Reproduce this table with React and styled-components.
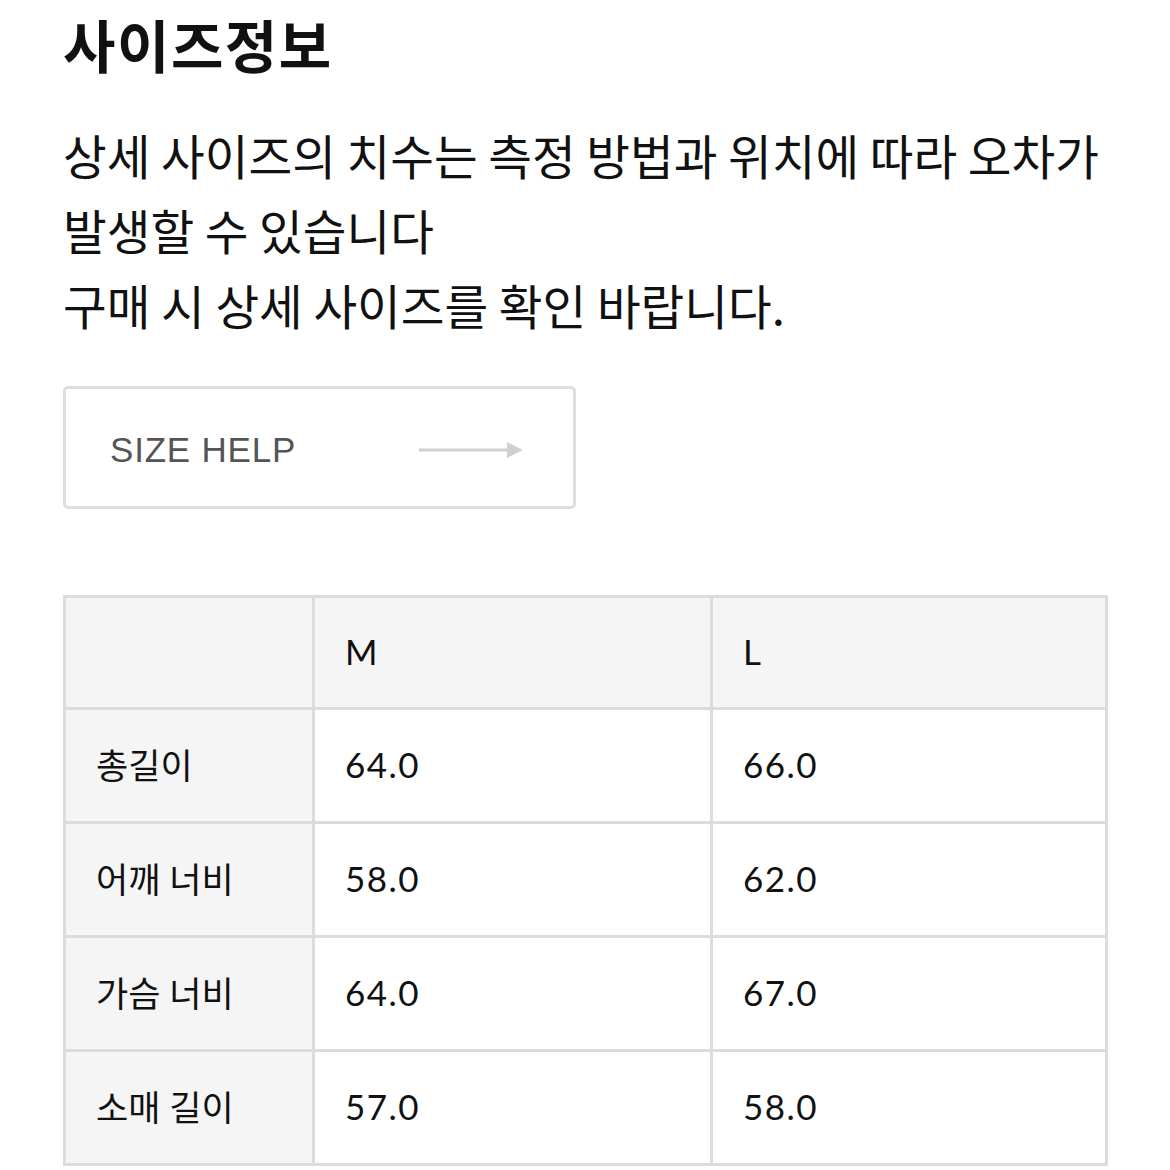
import React from 'react'
import styled, { createGlobalStyle } from 'styled-components'

const GlobalStyle = createGlobalStyle`
    body {
        margin: 0;
        background: #fff;
        font-family: "Noto Sans CJK KR", "Noto Sans", sans-serif;
        color: #111;
    }
`

const Page = styled.div`
    width: 1170px;
    height: 1170px;
    padding: 5px 63px 0;
    box-sizing: border-box;
    overflow: hidden;
`

const Title = styled.h1`
    margin: 0;
    font-size: 57px;
    line-height: 76px;
    font-weight: 700;
    letter-spacing: 1.5px;
    color: #111;
`

const Notice = styled.p`
    margin: 36px 0 0;
    font-size: 47.5px;
    line-height: 75px;
    font-weight: 400;
    color: #111;
    white-space: nowrap;
`

const HelpButton = styled.button`
    margin-top: 44px;
    width: 513px;
    height: 123px;
    display: flex;
    align-items: center;
    justify-content: space-between;
    padding: 4px 50px 0 44px;
    box-sizing: border-box;
    background: #fff;
    border: 3px solid #dedede;
    border-radius: 5px;
    font-family: "Liberation Sans", Arial, sans-serif;
    font-size: 35px;
    letter-spacing: 0.8px;
    color: #555;
    cursor: pointer;
`

const SizeTable = styled.table`
    margin-top: 86px;
    width: 1042px;
    border-collapse: collapse;
    table-layout: fixed;
    font-family: "Lato", "Noto Sans CJK KR", sans-serif;
    font-size: 35px;
    color: #111;
`

const Cell = styled.td`
    height: ${props => props.head ? '105px' : '107px'};
    padding: 0 0 4px 30px;
    border: 3px solid #dcdcdc;
    background: ${props => props.shaded ? '#f5f5f5' : '#fff'};
    text-align: left;
    vertical-align: middle;
    letter-spacing: ${props => props.num ? '1.5px' : '0'};
`

const Arrow = () => (
    <svg width="104" height="24" viewBox="0 0 104 24">
        <line x1="0" y1="12" x2="90" y2="12" stroke="#d0d0d0" strokeWidth="3" />
        <polygon points="88,4 104,12 88,20" fill="#d0d0d0" />
    </svg>
)

const rows = [
    ['총길이', '64.0', '66.0'],
    ['어깨 너비', '58.0', '62.0'],
    ['가슴 너비', '64.0', '67.0'],
    ['소매 길이', '57.0', '58.0'],
]

const App = () => (
    <Page>
        <GlobalStyle />
        <Title>사이즈정보</Title>
        <Notice>
            상세 사이즈의 치수는 측정 방법과 위치에 따라 오차가<br />
            발생할 수 있습니다<br />
            구매 시 상세 사이즈를 확인 바랍니다.
        </Notice>
        <HelpButton>
            <span>SIZE HELP</span>
            <Arrow />
        </HelpButton>
        <SizeTable>
            <colgroup>
                <col style={{ width: '249px' }} />
                <col style={{ width: '398px' }} />
                <col style={{ width: '395px' }} />
            </colgroup>
            <tbody>
                <tr>
                    <Cell head shaded></Cell>
                    <Cell head shaded>M</Cell>
                    <Cell head shaded>L</Cell>
                </tr>
                {rows.map((row, i) => (
                    <tr key={i}>
                        <Cell shaded>{row[0]}</Cell>
                        <Cell num>{row[1]}</Cell>
                        <Cell num>{row[2]}</Cell>
                    </tr>
                ))}
            </tbody>
        </SizeTable>
    </Page>
)

export default App
